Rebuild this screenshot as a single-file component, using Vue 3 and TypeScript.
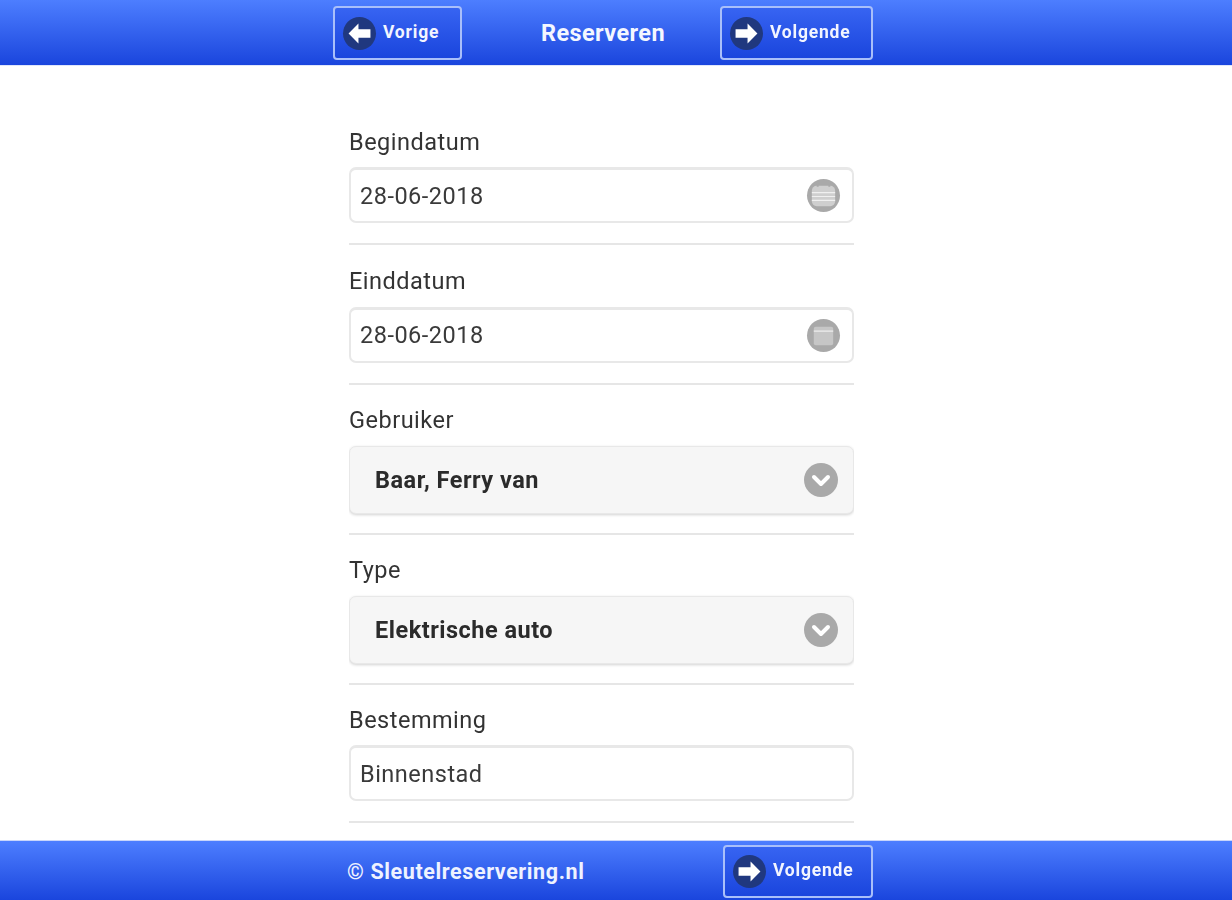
<template>
  <div class="page">
    <header class="bar top-bar">
      <div class="bar-inner">
        <button class="nav-btn prev-btn">
          <span class="nav-icon">
            <svg viewBox="0 0 24 24"><path d="M1.5 12 L11 2.5 V8 H22.5 V16 H11 V21.5 Z" fill="#fff" /></svg>
          </span>
          <span class="nav-text">Vorige</span>
        </button>
        <h1 class="title">Reserveren</h1>
        <button class="nav-btn next-btn">
          <span class="nav-icon">
            <svg viewBox="0 0 24 24"><path d="M22.5 12 L13 2.5 V8 H1.5 V16 H13 V21.5 Z" fill="#fff" /></svg>
          </span>
          <span class="nav-text">Volgende</span>
        </button>
      </div>
    </header>

    <main class="form">
      <div v-for="field in fields" :key="field.label" :class="['field', `field-${field.kind}`]">
        <label class="field-label">{{ field.label }}</label>

        <div v-if="field.kind === 'select'" class="select">
          <span>{{ field.value }}</span>
          <span class="select-icon">
            <svg viewBox="0 0 34 34" width="34" height="34"><path d="M10 14 L17 21 L24 14" fill="none" stroke="#fff" stroke-width="4" stroke-linecap="round" stroke-linejoin="round" /></svg>
          </span>
        </div>

        <div v-else class="input">
          <span>{{ field.value }}</span>
          <span v-if="field.kind === 'date'" class="date-icon">
            <svg v-if="field.striped" viewBox="0 0 34 34" width="33" height="33">
              <rect x="5" y="7" width="24" height="21" rx="5" fill="#cfcfcf" />
              <path d="M5 14 H29 M5 18 H29 M5 22 H29" stroke="#f0f0f0" stroke-width="1.2" />
              <path d="M11 4.5 V8 M23 4.5 V8" stroke="#a9a9a9" stroke-width="2" />
            </svg>
            <svg v-else viewBox="0 0 34 34" width="33" height="33">
              <rect x="7" y="8" width="20" height="19" rx="2" fill="#c6c6c6" />
              <path d="M7 12.5 H27" stroke="#e8e8e8" stroke-width="1.5" />
            </svg>
          </span>
        </div>
      </div>
    </main>

    <footer class="bar bottom-bar">
      <div class="bar-inner">
        <span class="copyright">© Sleutelreservering.nl</span>
        <button class="nav-btn footer-btn">
          <span class="nav-icon">
            <svg viewBox="0 0 24 24"><path d="M22.5 12 L13 2.5 V8 H1.5 V16 H13 V21.5 Z" fill="#fff" /></svg>
          </span>
          <span class="nav-text">Volgende</span>
        </button>
      </div>
    </footer>
  </div>
</template>

<script setup lang="ts">
interface Field {
  label: string
  value: string
  kind: 'date' | 'select' | 'text'
  striped?: boolean
}

const fields: Field[] = [
  { label: 'Begindatum', value: '28-06-2018', kind: 'date', striped: true },
  { label: 'Einddatum', value: '28-06-2018', kind: 'date' },
  { label: 'Gebruiker', value: 'Baar, Ferry van', kind: 'select' },
  { label: 'Type', value: 'Elektrische auto', kind: 'select' },
  { label: 'Bestemming', value: 'Binnenstad', kind: 'text' },
]
</script>

<style>
html,
body {
  margin: 0;
  background: #fff;
}
</style>

<style scoped>
.page {
  display: flex;
  flex-direction: column;
  height: 900px;
  overflow: hidden;
  font-family: Roboto, "Liberation Sans", sans-serif;
  color: #333;
  filter: blur(0.7px);
}

.bar {
  flex: none;
  background: linear-gradient(#4d7eff, #1a45dd);
}

.top-bar {
  height: 65px;
  border-bottom: 1px solid #dfe6fb;
}

.bottom-bar {
  height: 60px;
  border-top: 1px solid #c9d6fb;
  box-sizing: border-box;
}

.bar-inner {
  display: flex;
  align-items: center;
  justify-content: space-between;
  box-sizing: border-box;
  height: 100%;
}

.top-bar .bar-inner {
  width: 540px;
  margin-left: 333px;
  padding-top: 1px;
}

.bottom-bar .bar-inner {
  width: 526px;
  margin-left: 347px;
  padding-top: 1px;
}

.nav-btn {
  display: flex;
  align-items: center;
  gap: 7px;
  height: 54px;
  padding: 0 8px;
  box-sizing: border-box;
  border: 2px solid #a9bffa;
  border-radius: 4px;
  background: linear-gradient(#3764f2, #1a45dd);
  color: #f2f5ff;
  font: 700 17.5px Roboto, "Liberation Sans", sans-serif;
  letter-spacing: 0.8px;
}

.nav-text {
  padding-bottom: 3px;
}

.prev-btn {
  width: 129px;
}

.next-btn {
  width: 153px;
}

.footer-btn {
  width: 150px;
  height: 53px;
}

.nav-icon {
  display: flex;
  align-items: center;
  justify-content: center;
  width: 33px;
  height: 33px;
  border-radius: 50%;
  background: #20387f;
}

.nav-icon svg {
  width: 25px;
  height: 25px;
}

.title {
  margin: 0 0 0 24px;
  color: #f4f7ff;
  font-size: 23.5px;
  font-weight: 700;
  letter-spacing: 0.4px;
}

.copyright {
  color: #eef2ff;
  font-size: 21.5px;
  font-weight: 700;
  letter-spacing: 0.6px;
}

.form {
  flex: 1;
  min-height: 0;
  overflow: hidden;
  width: 505px;
  padding-top: 63px;
  margin-left: 349px;
  letter-spacing: 0.5px;
}

.field {
  padding-bottom: 20px;
  margin-bottom: 23.5px;
  border-bottom: 2px solid #e6e6e6;
}

.field-select {
  padding-bottom: 19px;
  margin-bottom: 22.5px;
}

.field-label {
  display: block;
  margin-bottom: 11px;
  font-size: 23.5px;
  line-height: 27px;
  color: #333;
}

.field-date + .field-date .field-label,
.field-select .field-label {
  margin-top: -1px;
  margin-bottom: 12px;
}

.input,
.select {
  display: flex;
  align-items: center;
  justify-content: space-between;
  box-sizing: border-box;
  font-size: 23.5px;
  border-radius: 7px;
}

.input {
  height: 56px;
  padding: 0 12px 0 9px;
  background: #fff;
  border: 2px solid #e8e8e8;
  border-top-width: 3px;
  color: #3a3a3a;
}

.select {
  height: 68px;
  padding: 0 15px 0 25px;
  background: #f6f6f6;
  border: 1px solid #e8e8e8;
  box-shadow: 0 1px 3px rgba(0, 0, 0, 0.18);
  font-weight: 700;
  color: #2b2b2b;
}

.date-icon,
.select-icon {
  display: flex;
  border-radius: 50%;
  background: #a9a9a9;
}
</style>
